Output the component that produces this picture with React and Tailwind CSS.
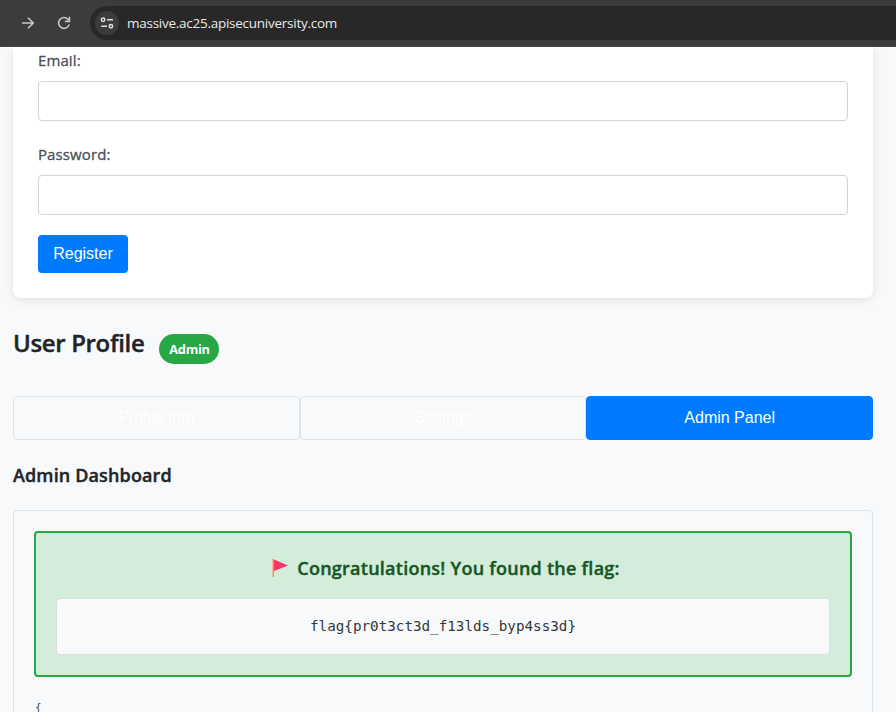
import React from "react";

const sans = "font-['Open_Sans','Noto_Sans',sans-serif]";

function Toolbar() {
  return (
    <header className="flex h-[47px] shrink-0 items-center border-b border-[#474747] bg-[#3c3c3c] pl-5">
      <svg className="mr-5 h-4 w-4 shrink-0" viewBox="0 0 16 16" fill="none" stroke="#c7c7c7" strokeWidth="1.6">
        <path d="M2 8h11M8 2.7 13.3 8 8 13.3" />
      </svg>
      <svg className="mr-[18px] h-4 w-4 shrink-0" viewBox="0 0 16 16" fill="none" stroke="#c7c7c7" strokeWidth="1.6">
        <path d="M13.2 9.4A5.4 5.4 0 1 1 12 4.3L13.4 5.8" />
        <path d="M13.4 1.8v4.6H8.9" />
      </svg>
      <div className="flex h-[34px] flex-1 items-center rounded-l-full bg-[#282828] pl-[5px]">
        <span className="flex h-6 w-6 items-center justify-center rounded-full bg-[#3c3c3c]">
          <svg className="h-4 w-4" viewBox="0 0 16 16" fill="none" stroke="#dedede" strokeWidth="1.5">
            <circle cx="4.1" cy="4.8" r="1.7" />
            <path d="M8 4.8h6M2.2 11.3H8" />
            <circle cx="11.9" cy="11.3" r="1.7" />
          </svg>
        </span>
        <span className="ml-2 text-[13.5px] leading-5 tracking-[-0.26px] whitespace-nowrap text-[#e8e8e8]">massive.ac25.apisecuniversity.com</span>
      </div>
    </header>
  );
}

function Field({ label, type }) {
  return (
    <label className="mb-5 block">
      <span className="block h-[26px] text-[15px] leading-[26px] font-medium tracking-[0.1px] text-[#495057] [-webkit-text-stroke:0.3px_#495057]">{label}</span>
      <input type={type} className="mt-2 block h-10 w-full rounded border border-[#ced4da] bg-white px-3 outline-none" />
    </label>
  );
}

function Flag() {
  return (
    <svg className="h-5 w-[18px]" viewBox="0 0 18 20">
      <path d="M1 1h2v18H1z" fill="#e98c62" />
      <path d="M1 1h1v18H1z" fill="#f3b99b" />
      <path d="M3 1.5 17 7.4 3 13z" fill="#f8346b" />
    </svg>
  );
}

export default function App() {
  const tab = "flex h-11 flex-1 items-center justify-center rounded border text-base font-['Liberation_Sans',Arial,sans-serif]";
  return (
    <div className={"flex h-[712px] w-[896px] flex-col overflow-hidden bg-[#f8f9fa] " + sans}>
      <Toolbar />
      <main className="min-h-0 flex-1 overflow-hidden pr-[23px] pl-[13px]">
        <section className="h-[251px] rounded-b-lg bg-white px-[25px] shadow-[0_2px_10px_rgba(0,0,0,0.1)]">
          <Field label="Email:" type="email" />
          <Field label="Password:" type="password" />
          <button className="h-[38px] w-[90px] rounded bg-[#007bff] font-['Liberation_Sans',Arial,sans-serif] text-base text-white">Register</button>
        </section>
        <div className="mt-[26px] flex h-10 items-center">
          <h2 className="w-[131px] pb-[2px] text-2xl leading-[38px] font-semibold tracking-[-0.35px] whitespace-nowrap text-[#212529] [-webkit-text-stroke:0.4px_#212529]">User Profile</h2>
          <span className="mt-[10px] ml-[15px] flex h-[30px] w-[60px] shrink-0 items-center justify-center rounded-full bg-[#28a745] pt-[2px] pl-px text-[12.8px] font-bold tracking-[-0.25px] text-white">Admin</span>
        </div>
        <nav className="mt-8 flex">
          <button className={tab + " border-[#dee2e6] text-white"}>Profile Info</button>
          <button className={tab + " border-[#dee2e6] text-white"}>Settings</button>
          <button className={tab + " border-[#007bff] bg-[#007bff] text-white"}>Admin Panel</button>
        </nav>
        <h3 className="mt-5 text-lg leading-[30px] font-semibold tracking-[0.13px] text-[#212529] [-webkit-text-stroke:0.4px_#212529]">Admin Dashboard</h3>
        <section className="mt-5 h-[260px] rounded border border-[#dee2e6] p-5">
          <div className="h-[146px] rounded border-2 border-[#28a745] bg-[#d4edda] px-5 pt-5">
            <h4 className="flex h-[30px] items-center justify-center pl-[5px] text-lg font-semibold tracking-[0.25px] whitespace-nowrap text-[#155724] [-webkit-text-stroke:0.4px_#155724]">
              <Flag />
              <span className="ml-2">Congratulations! You found the flag:</span>
            </h4>
            <div className="mt-[15px] flex h-[57px] items-center justify-center rounded border border-[#dddddd] bg-[#f8f9fa] font-['DejaVu_Sans_Mono',monospace] text-[14.25px] text-[#33373b]">
              flag&#123;pr0t3ct3d_f13lds_byp4ss3d&#125;
            </div>
          </div>
          <pre className="mt-[22px] ml-px font-['DejaVu_Sans_Mono',monospace] text-[11px] leading-[18px] text-[#495057]">&#123;</pre>
        </section>
      </main>
    </div>
  );
}
